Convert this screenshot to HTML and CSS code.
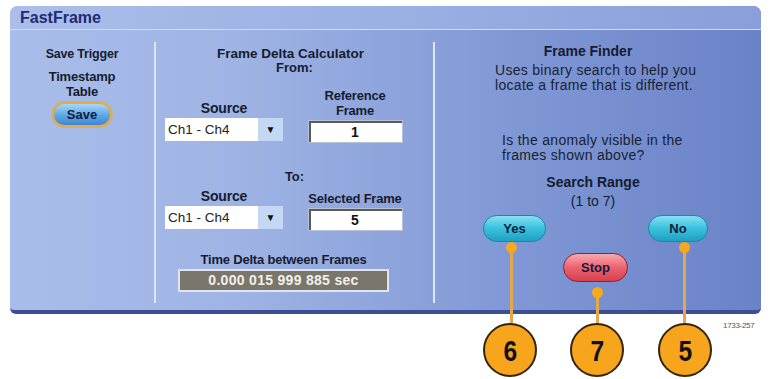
FILE: index.html
```html
<!DOCTYPE html>
<html lang="en">
<head>
  <meta charset="UTF-8">
  <title>FastFrame</title>
  <link rel="stylesheet" href="styles.css">
</head>
<body>
  <div class="panel">
    <div class="titlebar">FastFrame</div>
    <div class="panel-body">

      <div class="col col-save">
        <div class="lbl lbl-trigger">Save Trigger</div>
        <div class="lbl lbl-stamp">Timestamp<br>Table</div>
        <button class="btn btn-save">Save</button>
      </div>

      <div class="col col-delta">
        <div class="delta-title">Frame Delta Calculator</div>
        <div class="delta-from">From:</div>
        <div class="pick-row">
          <div class="group group-src">
            <div class="lbl">Source</div>
            <div class="dropdown"><span class="dd-text">Ch1 - Ch4</span><span class="dd-arrow">&#9660;</span></div>
          </div>
          <div class="group group-frame">
            <div class="lbl">Reference<br>Frame</div>
            <div class="field">1</div>
          </div>
        </div>
        <div class="to-lbl">To:</div>
        <div class="pick-row">
          <div class="group group-src">
            <div class="lbl">Source</div>
            <div class="dropdown"><span class="dd-text">Ch1 - Ch4</span><span class="dd-arrow">&#9660;</span></div>
          </div>
          <div class="group group-frame">
            <div class="lbl">Selected Frame</div>
            <div class="field">5</div>
          </div>
        </div>
        <div class="time-delta">
          <div class="lbl lbl-small">Time Delta between Frames</div>
          <div class="readout">0.000 015 999 885 sec</div>
        </div>
      </div>

      <div class="col col-finder">
        <div class="finder-title">Frame Finder</div>
        <p class="note note-top">Uses binary search to help you<br>locate a frame that is different.</p>
        <p class="note note-question">Is the anomaly visible in the<br>frames shown above?</p>
        <div class="range-title">Search Range</div>
        <div class="range-sub">(1 to 7)</div>
        <div class="answer-row">
          <button class="btn btn-cyan btn-yes">Yes</button>
          <button class="btn btn-cyan btn-no">No</button>
        </div>
        <button class="btn btn-stop">Stop</button>
      </div>

    </div>
  </div>

  <!-- callouts sit over the panel and below it -->
  <div class="callout-line line-yes"></div>
  <div class="callout-line line-stop"></div>
  <div class="callout-line line-no"></div>
  <div class="callout-dot dot-yes"></div>
  <div class="callout-dot dot-stop"></div>
  <div class="callout-dot dot-no"></div>
  <div class="callout callout-6"><span>6</span></div>
  <div class="callout callout-7"><span>7</span></div>
  <div class="callout callout-5"><span>5</span></div>
  <div class="fig-no">1733-257</div>
</body>
</html>
```

FILE: styles.css
```css
body {
  margin: 0;
  background: #fff;
  font-family: "Liberation Sans", Arial, sans-serif;
  color: #161c30;
  position: relative;
  height: 379px;
  overflow: hidden;
}
.panel {
  margin: 6px 9px 0 10px;
  height: 308px;
  box-sizing: border-box;
  border-radius: 8px 8px 6px 6px;
  border-bottom: 4px solid #3d4d93;
  background: linear-gradient(to right, #a8bde9, #9fb4e4 30%, #8199d6 65%, #6a83c7);
  display: flex;
  flex-direction: column;
  overflow: hidden;
}
.titlebar {
  height: 23px;
  line-height: 23px;
  padding-left: 10px;
  border-bottom: 1px solid #cfdbf4;
  background: linear-gradient(to right, #abbeea, #9bb0e3 50%, #8a9fda);
  font-size: 16px;
  font-weight: bold;
  color: #1e2a76;
}
.panel-body {
  flex: 1;
  display: flex;
  padding: 12px 0 7px;
}
.col {
  box-sizing: border-box;
}
.col-save {
  width: 144px;
  text-align: center;
}
.col-delta {
  width: 279px;
  border-left: 2px solid #dce6f8;
  text-align: center;
}
.col-finder {
  flex: 1;
  border-left: 2px solid #dce6f8;
}
.lbl {
  font-size: 13px;
  font-weight: bold;
  line-height: 15px;
  letter-spacing: -0.2px;
}
.lbl-trigger {
  margin-top: 5px;
  font-size: 12.5px;
}
.lbl-stamp {
  margin-top: 7px;
}
.btn {
  font-family: "Liberation Sans", Arial, sans-serif;
  font-weight: bold;
  font-size: 13px;
  color: #101c3c;
  padding: 0;
  cursor: pointer;
}
.btn-save {
  margin-top: 3px;
  width: 60px;
  height: 25px;
  border-radius: 13px;
  border: 2px solid #e2ab45;
  background: linear-gradient(#a9d6f8, #5da6e6 55%, #3f86d2);
  box-shadow: 0 0 0 1px #c9b27a;
}

.delta-title {
  margin-top: 5px;
  padding-right: 8px;
  font-size: 13.5px;
  font-weight: bold;
  line-height: 14px;
}
.delta-from {
  font-size: 13px;
  font-weight: bold;
  line-height: 13px;
}
.pick-row {
  display: flex;
  align-items: flex-end;
  padding-left: 9px;
  gap: 21px;
}
.delta-from + .pick-row {
  margin-top: 14px;
}
.group {
  display: flex;
  flex-direction: column;
  align-items: center;
}
.group-src {
  width: 118px;
}
.group-frame {
  width: 102px;
}
.group-src .lbl {
  font-size: 14px;
  margin-bottom: 2px;
}
.dropdown {
  display: flex;
  width: 118px;
  height: 23px;
  margin-bottom: 2px;
}
.dd-text {
  width: 93px;
  background: #fff;
  text-align: left;
  padding-left: 3px;
  box-sizing: border-box;
  font-size: 13.5px;
  line-height: 23px;
  color: #222;
}
.dd-arrow {
  flex: 1;
  background: #c4d7f3;
  font-size: 10px;
  line-height: 23px;
  color: #111;
}
.group-frame .lbl {
  margin-bottom: 2px;
}
.field {
  width: 95px;
  height: 23px;
  box-sizing: border-box;
  background: #fff;
  border: 1px solid #b8c2d6;
  box-shadow: inset 2px 2px 0 #5a5a5a;
  font-size: 14px;
  font-weight: bold;
  line-height: 22px;
  color: #111;
}
.to-lbl {
  margin-top: 26px;
  margin-bottom: 5px;
  font-size: 13px;
  font-weight: bold;
  line-height: 15px;
}
.time-delta {
  width: 211px;
  margin: 22px 0 0 22px;
}
.lbl-small {
  font-size: 13px;
  line-height: 14px;
  margin-bottom: 2px;
}
.readout {
  height: 23px;
  box-sizing: border-box;
  background: #7a766b;
  border: 2px solid #dfe5f0;
  color: #f2f1ea;
  font-size: 14px;
  font-weight: bold;
  line-height: 19px;
  letter-spacing: 0.3px;
}

.finder-title {
  margin: 2px 20px 0 0;
  text-align: center;
  font-size: 14px;
  font-weight: bold;
  line-height: 15px;
}
.note {
  margin: 0;
  font-size: 14px;
  line-height: 15px;
  letter-spacing: 0.3px;
  color: #1a1f30;
}
.note-top {
  margin: 4px 0 0 60px;
}
.note-question {
  margin: 40px 0 0 67px;
}
.range-title {
  margin: 11px 10px 0 0;
  text-align: center;
  font-size: 14px;
  font-weight: bold;
  line-height: 16px;
}
.range-sub {
  margin: 3px 10px 0 0;
  text-align: center;
  font-size: 14px;
  line-height: 16px;
}
.answer-row {
  display: flex;
  justify-content: space-between;
  margin: 6px 0 0 48px;
  width: 225px;
}
.btn-cyan {
  height: 27px;
  border-radius: 14px;
  border: 1px solid #1e86a2;
  background: linear-gradient(#86e0f2, #3ec4e0 45%, #1fa0c2);
}
.btn-yes {
  width: 63px;
}
.btn-no {
  width: 60px;
}
.btn-stop {
  display: block;
  margin: 11px 0 0 128px;
  width: 65px;
  height: 29px;
  border-radius: 15px;
  border: 1px solid #8e2233;
  background: linear-gradient(#f8a8b0, #ec6270 50%, #d6404f);
}

.callout-line {
  position: absolute;
  width: 3px;
  background: #e5a64c;
}
.line-yes { left: 510px; top: 247px; height: 78px; }
.line-stop { left: 596px; top: 292px; height: 33px; }
.line-no { left: 683px; top: 247px; height: 78px; }
.callout-dot {
  position: absolute;
  width: 11px;
  height: 11px;
  border-radius: 50%;
  background: #f6a81e;
}
.dot-yes { left: 506px; top: 242px; }
.dot-stop { left: 592px; top: 287px; }
.dot-no { left: 679px; top: 242px; }
.callout {
  position: absolute;
  top: 323px;
  width: 54px;
  height: 54px;
  box-sizing: border-box;
  border-radius: 50%;
  border: 2px solid #33250b;
  background: #f6a51d;
  text-align: center;
  font-size: 30px;
  font-weight: bold;
  line-height: 52px;
  color: #111;
}
.callout span {
  display: inline-block;
  transform: scaleX(0.82);
}
.callout-6 { left: 483px; }
.callout-7 { left: 570px; }
.callout-5 { left: 658px; }
.fig-no {
  position: absolute;
  left: 723px;
  top: 321px;
  font-size: 8px;
  letter-spacing: -0.3px;
  color: #555;
}
```
